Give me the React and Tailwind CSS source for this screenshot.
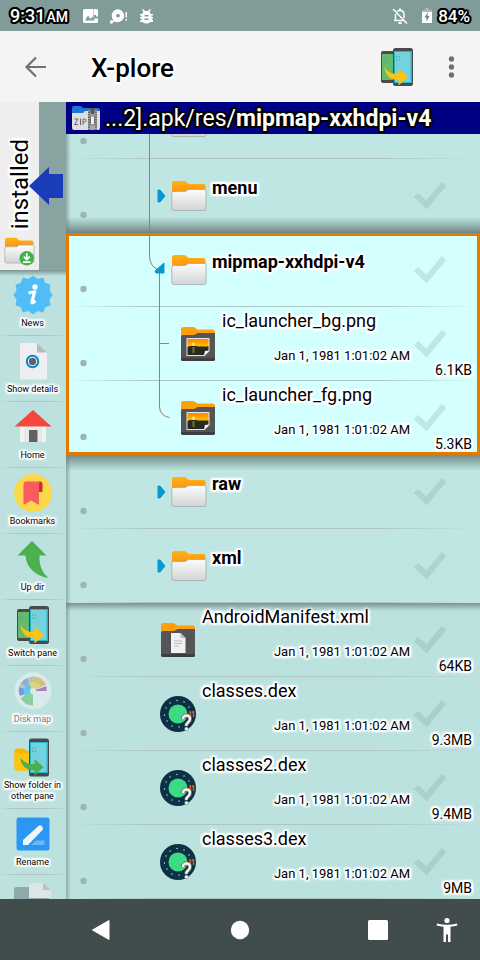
import React from "react";

const HALO =
  "[text-shadow:2px_0_1px_#fff,-2px_0_1px_#fff,0_2px_1px_#fff,0_-2px_1px_#fff,1px_1px_1px_#fff,-1px_1px_1px_#fff,1px_-1px_1px_#fff,-1px_-1px_1px_#fff,2px_2px_2px_#fff,-2px_2px_2px_#fff,2px_-2px_2px_#fff,-2px_-2px_2px_#fff]";
const DARK_HALO =
  "[text-shadow:2px_0_0_#000,-2px_0_0_#000,0_2px_0_#000,0_-2px_0_#000,1px_1px_0_#000,-1px_1px_0_#000,1px_-1px_0_#000,-1px_-1px_0_#000,2px_1px_0_#000,-2px_1px_0_#000,2px_-1px_0_#000,-2px_-1px_0_#000,1px_2px_0_#000,-1px_2px_0_#000,1px_-2px_0_#000,-1px_-2px_0_#000]";
const LINE =
  "bg-[linear-gradient(90deg,transparent,#adc4c3_20%,#adc4c3_75%,transparent)] bg-[length:100%_1px] bg-bottom bg-no-repeat";

/* ---------- icons ---------- */

function PhonesIcon({ className }) {
  return (
    <svg viewBox="0 0 32 38" className={className} aria-hidden="true">
      <rect x="0" y="3" width="17" height="32" rx="2" fill="#4a4a4a" />
      <rect x="1" y="6" width="16" height="26" fill="#66bb6a" />
      <rect x="12" y="0" width="20" height="38" rx="2.500" fill="#4a4a4a" />
      <rect x="13" y="3" width="18" height="32" fill="#26b5cf" />
      <rect x="14" y="4" width="15.500" height="30" fill="#74d2de" />
      <path d="M2.500 10h1.500M2.500 13h1.500M5 10h1M5 13h1M15 9h1.500M15 12h1.500M18 9h1M18 12h1" stroke="#3c9a9f" strokeWidth="1" />
      <path d="M3.500 19c3 5 8 7.500 14 7V20.500L27 29 17.500 37.500V32C10 32.500 4 27 3.500 19Z" fill="#ffc20e" />
    </svg>
  );
}

function FolderShape({ id }) {
  return (
    <>
      <defs>
        <linearGradient id={id + "o"} x1="0" y1="0" x2="0" y2="1">
          <stop offset="0" stopColor="#ffb310" />
          <stop offset="1" stopColor="#fb8c1e" />
        </linearGradient>
        <linearGradient id={id + "w"} x1="0" y1="0" x2="0" y2="1">
          <stop offset="0" stopColor="#fdfdfd" />
          <stop offset="1" stopColor="#d2d3d4" />
        </linearGradient>
      </defs>
      <path d="M1 15V3.500Q1 1 3.500 1H13Q15 1 16 2.500T19 4H32Q34.500 4 34.500 6.500V15Z" fill={`url(#${id}o)`} />
      <path d="M.8 13Q.8 11.500 2.500 11.500H13.500Q15 11.500 16 10.500T18.500 9.500H33Q35 9.500 35 11.500V28.500Q35 30.500 33 30.500H2.800Q.8 30.500 .8 28.500Z" fill={`url(#${id}w)`} stroke="#a4aaaa" strokeWidth=".8" />
    </>
  );
}

function FolderIcon({ id }) {
  return (
    <svg viewBox="0 0 36 32" className="h-8 w-9 shrink-0" aria-hidden="true">
      <FolderShape id={id} />
    </svg>
  );
}

function DarkFolder({ children }) {
  return (
    <svg viewBox="0 0 36 36" className="size-9 shrink-0" aria-hidden="true">
      <path d="M1 14V3.500Q1 1 3.500 1H13Q15 1 16 2.500T19 3.500H32.500Q35 3.500 35 6V14Z" fill="#ff9f0a" />
      <path d="M1 11Q1 9 3 9H13Q15 9 16 8T18.500 7H35V33Q35 35 33 35H3Q1 35 1 33Z" fill="#555557" />
      <path d="M1 32H35V33Q35 35 33 35H3Q1 35 1 33Z" fill="#3d3d3f" />
      {children}
    </svg>
  );
}

function ImageFileIcon({ id }) {
  return (
    <DarkFolder>
      <defs>
        <linearGradient id={id} x1="0" y1="0" x2="0" y2="1">
          <stop offset="0" stopColor="#ff8400" />
          <stop offset="1" stopColor="#ffc400" />
        </linearGradient>
      </defs>
      <path d="M6.500 12H29.500V25L24.500 30H6.500Z" fill="#e4e4e4" />
      <path d="M7.500 13H28.500V21H7.500Z" fill={`url(#${id})`} />
      <path d="M7.500 21 10 20H16L18 20.500H28.500V25L24 29H7.500Z" fill="#272a22" />
      <circle cx="13.500" cy="18" r="1.500" fill="#ffef70" />
      <path d="M12.500 21H14.500V27H12.500Z" fill="#a98b1d" opacity=".7" />
      <path d="M24 29.500 25 25 29.500 24.500Z" fill="#fff" />
    </DarkFolder>
  );
}

function TextFileIcon() {
  return (
    <DarkFolder>
      <path d="M11 11H20.500L25.500 16V31H11Z" fill="#f1f1f1" />
      <path d="M20.500 11V16H25.500Z" fill="#bdbdbd" />
      <path d="M14 19H22M14 21.500H22M14 24H19" stroke="#bcbcbc" strokeWidth="1.200" />
    </DarkFolder>
  );
}

function DexIcon() {
  return (
    <svg viewBox="0 0 36 36" className="size-9 shrink-0" aria-hidden="true">
      <circle cx="18" cy="18" r="18" fill="#0b3145" />
      <g fill="#dbe7ea">
        <circle cx="6" cy="12" r=".7" /><circle cx="10" cy="7" r=".7" /><circle cx="17" cy="4.500" r=".7" />
        <circle cx="24" cy="6" r=".7" /><circle cx="29" cy="11" r=".7" /><circle cx="4.500" cy="19" r=".7" />
        <circle cx="7" cy="25" r=".7" /><circle cx="12" cy="30" r=".7" /><circle cx="19" cy="31" r=".7" />
      </g>
      <circle cx="18" cy="18" r="9.500" fill="#3ddc84" />
      <path d="M29 16H30.500V21M32 16H33.500V21" fill="none" stroke="#f0592b" strokeWidth="1.500" />
      <path d="M23 23Q23 19.500 26.500 19.500T30 23Q30 25 28 26.500T26.500 30" fill="none" stroke="#666" strokeWidth="4" />
      <path d="M23 23Q23 19.500 26.500 19.500T30 23Q30 25 28 26.500T26.500 30" fill="none" stroke="#f5f5f5" strokeWidth="2.400" />
      <circle cx="26.500" cy="33" r="1.900" fill="#f5f5f5" stroke="#777" strokeWidth=".6" />
    </svg>
  );
}

function ZipIcon() {
  return (
    <svg viewBox="0 0 30 26" className="h-[26px] w-[30px] shrink-0" aria-hidden="true">
      <path d="M1 12V3Q1 1 3 1H9Q11 1 12 3H27Q29 3 29 5V12Z" fill="#1e73d6" />
      <path d="M1 8H12L14 6H29V23Q29 25 27 25H3Q1 25 1 23Z" fill="#dedfe1" />
      <path d="M17 5H26V25H17Z" fill="#aaa" />
      <path d="M18 4V25M25 4V25" stroke="#6b6b6b" strokeWidth="2" strokeDasharray="1.500 1" />
      <rect x="19.500" y="3" width="4" height="6" fill="#555" />
      <rect x="19.500" y="11" width="4" height="9" rx="1" fill="#eee" stroke="#555" strokeWidth=".8" />
      <path d="M3.500 14H7L3.500 19.500H7M9.500 13.500V20M12 20V14H13.500Q15 14 15 15.500T13.500 17H12" fill="none" stroke="#666" strokeWidth="1" />
    </svg>
  );
}

function NewsIcon() {
  return (
    <svg viewBox="0 0 40 40" className="size-10" aria-hidden="true">
      <path d="M20 .8 24.800 4 30.200 2.500 32.200 7.800 37.500 9.800 36.500 15.200 39.500 20 36.500 24.800 37.500 30.200 32.200 32.200 30.200 37.500 24.800 36 20 39.200 15.200 36 9.800 37.500 7.800 32.200 2.500 30.200 3.500 24.800 .5 20 3.500 15.200 2.500 9.800 7.800 7.800 9.800 2.500 15.200 4Z" fill="#50bdf8" />
      <circle cx="22" cy="12" r="2.700" fill="#fff" />
      <path d="M15.500 18Q19 17 21.500 17L19 26.500Q18.700 28 20 27.500L22.500 26" fill="none" stroke="#fff" strokeWidth="3.200" />
    </svg>
  );
}

function DetailsIcon() {
  return (
    <svg viewBox="0 0 40 40" className="size-10" aria-hidden="true">
      <path d="M7 3Q7 2 8 2H24L34 11.500V37.500Q34 38.500 33 38.500H8Q7 38.500 7 37.500Z" fill="#eeeff0" />
      <path d="M24 2V11.500H34Z" fill="#b9bcbd" />
      <circle cx="19.500" cy="20.500" r="5.700" fill="#fff" stroke="#0a83c8" strokeWidth="2" />
      <circle cx="19.500" cy="20.500" r="3.700" fill="#5b6469" />
    </svg>
  );
}

function HomeIcon() {
  return (
    <svg viewBox="0 0 40 40" className="size-10" aria-hidden="true">
      <path d="M7 17 20 6 33 17V35H7Z" fill="#f1f2f2" />
      <path d="M11 19H29V35H11Z" fill="#dfe1e2" opacity=".5" />
      <path d="M20 3 1.500 19.500H38.500Z" fill="#f5483d" />
      <rect x="16" y="23" width="8.500" height="12" fill="#616161" />
    </svg>
  );
}

function BookmarksIcon() {
  return (
    <svg viewBox="0 0 40 40" className="size-10" aria-hidden="true">
      <circle cx="20" cy="20" r="19" fill="#fbd84b" />
      <path d="M25.500 8.500H27.500Q29.500 8.500 29.500 11V19H25.500Z" fill="#c62f34" />
      <path d="M10.500 11Q10.500 8.500 13 8.500H28Q26 9 26 11V32L18.200 27.500 10.500 32Z" fill="#f65d5c" />
    </svg>
  );
}

function UpIcon() {
  return (
    <svg viewBox="0 0 40 40" className="size-10" aria-hidden="true">
      <path d="M19 2 33.500 16.500H26.500C26 26 29 33.500 35.500 39 22 37 13 28 12.500 16.500H4.500Z" fill="#4caf50" />
    </svg>
  );
}

function DiskMapIcon() {
  return (
    <svg viewBox="0 0 40 40" className="size-10 opacity-60" aria-hidden="true">
      <circle cx="20" cy="20" r="18.500" fill="#eef1f2" />
      <path d="M20 20 7 25A14.500 14.500 0 0 1 6 16Z" fill="#536dc0" />
      <path d="M20 20 6 16A14.500 14.500 0 0 1 10 10Z" fill="#aab4bd" />
      <path d="M20 20 8 12A14.500 14.500 0 0 1 14 7Z" fill="#7986cb" />
      <path d="M20 20 14 7A14.500 14.500 0 0 1 20 5.500Z" fill="#aab4bd" />
      <path d="M20 20V5.500A14.500 14.500 0 0 1 33 13.500Z" fill="#f0a73b" />
      <path d="M20 20 33.500 15V20Z" fill="#a33cb5" />
      <path d="M20 20V34.500A14.500 14.500 0 0 1 7.500 27Z" fill="#6fc278" />
      <path d="M20 20 12 25A9 9 0 0 1 15.500 12Z" fill="#29b6f6" />
      <path d="M20 20 15.500 12A9 9 0 0 1 28 16Z" fill="#e7cf3e" />
      <circle cx="20" cy="20" r="3" fill="#eef1f2" />
    </svg>
  );
}

function FolderOtherIcon() {
  return (
    <svg viewBox="0 0 40 40" className="size-10" aria-hidden="true">
      <path d="M1.500 14Q1.500 11.500 4 11.500H11L14 14H17V33.500H4Q1.500 33.500 1.500 31Z" fill="#ffb300" />
      <path d="M1.500 16H17V33.500H4Q1.500 33.500 1.500 31Z" fill="#ffc40d" />
      <rect x="16" y="1.500" width="20" height="38" rx="2.500" fill="#4a4a4a" />
      <rect x="17" y="5" width="18" height="31" fill="#26b5cf" />
      <rect x="18" y="6" width="15.500" height="29" fill="#74d2de" />
      <path d="M19 11h1.500M19 14h1.500M22 11h1M22 14h1" stroke="#3c9a9f" />
      <path d="M7.500 20.500C10 25 15 27.500 21.500 27V22L30.500 30 21.500 38.500V33.500C14 33.500 7.500 29 7.500 20.500Z" fill="#4caf50" />
    </svg>
  );
}

function RenameIcon() {
  return (
    <svg viewBox="0 0 40 40" className="size-10" aria-hidden="true">
      <rect x="3.500" y="3.500" width="33" height="33" rx="2.500" fill="#2997f3" />
      <path d="M18 31 23 26.500H31.500V31Z" fill="#69b8f7" />
      <path d="M10 26 25.500 12Q27.500 10.500 29.200 12.500T29.500 16L15 31H10Z" fill="#f1f3f5" />
    </svg>
  );
}

function CopyIcon() {
  return (
    <svg viewBox="0 0 40 40" className="size-10" aria-hidden="true">
      <path d="M1 9Q1 7 3 7H17V30H1Z" fill="#8fa9ad" />
      <path d="M14 15H36V34H14Z" fill="#8fa9ad" />
      <path d="M16 3H30L38 10V18H16Z" fill="#dce6e6" />
      <path d="M30 3V10H38Z" fill="#b4c7c7" />
    </svg>
  );
}

/* ---------- file rows ---------- */

const TREE = {
  pass: { w: "w-[105px]", lines: "M83.500 0V74", arrow: "M92 31H94L99 37 94 43H92Z" },
  last: { w: "w-[105px]", lines: "M83.500 0V22Q83.500 33 91 36M93.500 38V74", arrow: "M89 38 98 30V40H90Z" },
  plain: { w: "w-[105px]", arrow: "M92 31H94L99 37 94 43H92Z" },
  child: { w: "w-[114px]", lines: "M93.500 0V74M94 36.500H103" },
  childLast: { w: "w-[114px]", lines: "M93.500 0V26Q94 35 103.500 36.500" },
  root: { w: "w-[94px]" },
};

function Row({ id, name, tree, icon, date, size, folder }) {
  const t = TREE[tree];
  return (
    <li className={`flex h-[74px] shrink-0 ${LINE}`}>
      <svg className={`h-[74px] shrink-0 ${t.w}`} aria-hidden="true">
        <circle cx="17.500" cy="56" r="3.200" fill="#9fb4b3" />
        {t.lines && <path d={t.lines} fill="none" stroke="#a3805c" strokeWidth="1" />}
        {t.arrow && <path d={t.arrow} fill="#0598d2" stroke="#0598d2" strokeLinejoin="round" />}
      </svg>
      <div className="flex h-[74px] items-center">{icon}</div>
      <div className={`flex min-w-0 flex-1 flex-col ${folder ? "pl-[5px]" : "pl-[6px]"}`}>
        {name && (
          <label
            htmlFor={id}
            className={`text-lg leading-[22px] whitespace-nowrap ${HALO} ${folder ? "pt-[18px] font-bold" : "pt-[3px]"}`}
          >
            {name}
          </label>
        )}
        {date && <span className={`mt-[15px] text-right text-[13px] leading-[18px] ${HALO}`}>{date}</span>}
      </div>
      <div className="flex w-[70px] shrink-0 flex-col pt-[20px] pr-2 pl-1">
        <span className="grid h-8 w-8">
          <input
            id={id}
            type="checkbox"
            aria-label={name ? undefined : "Select folder"}
            className="col-start-1 row-start-1 size-8 appearance-none"
          />
          <svg viewBox="0 0 32 32" className="pointer-events-none col-start-1 row-start-1 size-8" aria-hidden="true">
            <path d="M2 16 12.500 26 30 5" fill="none" stroke="#6b8583" strokeOpacity=".2" strokeWidth="6" />
          </svg>
        </span>
        {size && <span className={`mt-[2px] text-right text-sm leading-[18px] ${HALO}`}>{size}</span>}
      </div>
    </li>
  );
}

const DATE = "Jan 1, 1981 1:01:02 AM";

function Pane() {
  return (
    <main className="flex min-w-0 flex-1 flex-col">
      <div className="flex h-8 shrink-0 items-center gap-1 bg-[#000084] pl-[5px] whitespace-nowrap text-white">
        <ZipIcon />
        <h2 className={`flex pt-[2px] text-[23px] leading-[30px] ${DARK_HALO}`}>
          <span>...2].apk/res/</span>
          <span className="font-bold">mipmap-xxhdpi-v4</span>
        </h2>
      </div>
      <div className="relative flex min-h-0 flex-1 flex-col justify-end overflow-hidden bg-[#bce2e0]">
        <ul className="relative flex shrink-0 flex-col bg-[#c0e6e4]">
          <Row id="above" tree="pass" folder icon={<FolderIcon id="f0" />} />
          <Row id="menu" name="menu" tree="pass" folder icon={<FolderIcon id="f1" />} />
          <li className="pointer-events-none absolute inset-x-0 bottom-0 h-4 bg-linear-to-b from-transparent to-[#6f8583]" />
        </ul>
        <ul className="relative z-10 flex shrink-0 flex-col bg-[#d3fffe]">
          <Row id="mipmap" name="mipmap-xxhdpi-v4" tree="last" folder icon={<FolderIcon id="f2" />} />
          <Row id="bg" name="ic_launcher_bg.png" tree="child" icon={<ImageFileIcon id="i1" />} date={DATE} size="6.1KB" />
          <Row id="fg" name="ic_launcher_fg.png" tree="childLast" icon={<ImageFileIcon id="i2" />} date={DATE} size="5.3KB" />
          <li className="pointer-events-none absolute inset-0 border-[3px] border-[#e07b00]" />
        </ul>
        <ul className="relative flex shrink-0 flex-col bg-[#c0e6e4]">
          <li className="pointer-events-none absolute inset-x-0 top-0 h-4 bg-linear-to-b from-[#748b89] to-transparent" />
          <Row id="raw" name="raw" tree="plain" folder icon={<FolderIcon id="f3" />} />
          <Row id="xml" name="xml" tree="plain" folder icon={<FolderIcon id="f4" />} />
        </ul>
        <ul className="relative flex shrink-0 flex-col">
          <li className="pointer-events-none absolute inset-x-0 top-0 h-2 bg-linear-to-b from-[#7c9391] to-transparent" />
          <Row id="manifest" name="AndroidManifest.xml" tree="root" icon={<TextFileIcon />} date={DATE} size="64KB" />
          <Row id="dex1" name="classes.dex" tree="root" icon={<DexIcon />} date={DATE} size="9.3MB" />
          <Row id="dex2" name="classes2.dex" tree="root" icon={<DexIcon />} date={DATE} size="9.4MB" />
          <Row id="dex3" name="classes3.dex" tree="root" icon={<DexIcon />} date={DATE} size="9MB" />
        </ul>
        <div className="pointer-events-none absolute inset-y-0 left-0 w-[5px] bg-linear-to-r from-[#6b8583]/60 to-transparent" />
      </div>
    </main>
  );
}

/* ---------- side column ---------- */

const ACTIONS = [
  { label: "News", icon: <NewsIcon /> },
  { label: "Show details", icon: <DetailsIcon /> },
  { label: "Home", icon: <HomeIcon /> },
  { label: "Bookmarks", icon: <BookmarksIcon /> },
  { label: "Up dir", icon: <UpIcon /> },
  { label: "Switch pane", icon: <PhonesIcon className="h-10 w-8 py-px" /> },
  { label: "Disk map", icon: <DiskMapIcon />, off: true },
  { label: "Show folder in other pane", icon: <FolderOtherIcon /> },
  { label: "Rename", icon: <RenameIcon /> },
];

function Sidebar() {
  return (
    <aside className="flex w-[66px] shrink-0 flex-col overflow-hidden bg-[#bce1df]">
      <div className="relative flex h-[168px] shrink-0 bg-[#89a3a1]">
        <button className="flex w-[39px] flex-col items-center justify-end gap-2 bg-[#eeeeee] pb-1">
          <span className={`rotate-180 text-[24px] leading-[32px] [writing-mode:vertical-rl] ${HALO}`}>installed</span>
          <svg viewBox="0 0 36 34" className="h-[29px] w-[31px] shrink-0" aria-hidden="true">
            <FolderShape id="inst" />
            <circle cx="26.500" cy="25" r="8.500" fill="#3db54a" />
            <path d="M26.500 19V26M23 23 26.500 26.500 30 23M22 29.500H31" fill="none" stroke="#fff" strokeWidth="2" />
          </svg>
        </button>
        <svg viewBox="0 0 34 38" className="absolute top-[65px] left-[29px] h-[38px] w-[34px]" aria-hidden="true">
          <path d="M0 19 20 0V7H34V31H20V38Z" fill="#1b3cb8" />
        </svg>
      </div>
      <nav className="relative flex min-h-0 flex-1 flex-col overflow-hidden">
        <div className="pointer-events-none absolute inset-x-0 top-0 h-[6px] bg-linear-to-b from-[#7c9391] to-transparent" />
        {ACTIONS.map((a) => (
          <button
            key={a.label}
            className={`flex shrink-0 flex-col items-center gap-[3px] pt-[5px] pr-[3px] pb-[7px] pl-[2px] text-[9px] leading-[11px] ${LINE} ${a.off ? "text-[#6d7d7c]" : "text-black"}`}
          >
            {a.icon}
            <span className={HALO}>{a.label}</span>
          </button>
        ))}
        <button aria-label="Copy" className="flex shrink-0 flex-col items-center pt-[5px] pr-[3px] pl-[2px]">
          <CopyIcon />
        </button>
      </nav>
    </aside>
  );
}

/* ---------- bars ---------- */

function StatusBar() {
  return (
    <div className="flex h-[31px] shrink-0 items-center bg-[#819b98] px-[10px] pt-px text-white">
      <div className={`flex items-baseline gap-px text-lg leading-6 font-medium ${DARK_HALO}`}>
        <span>9:31</span>
        <span className="text-sm leading-5">AM</span>
      </div>
      <svg viewBox="0 0 72 18" className="ml-[14px] h-[18px] w-[72px]" fill="#fff" aria-hidden="true">
        <path d="M2.500 2H11.500V11.500H16V14.500Q16 16 14.500 16H2.500Q1 16 1 14.500V3.500Q1 2 2.500 2ZM3 13.500H13L10.500 9.500 8.500 12 6 8.500Z" fillRule="evenodd" />
        <path d="M12 2H14.500Q16 2 16 3.500V9.500H14V8H12Z" />
        <path d="M36 2.200A6.500 6.500 0 1 1 32.500 14.500L30.500 15 31 12.500A6.500 6.500 0 0 1 36 2.200ZM36 6.700A2 2 0 1 0 36.010 6.700Z" fillRule="evenodd" />
        <circle cx="36" cy="8.700" r="4" fill="none" stroke="#fff" strokeWidth="4" />
        <circle cx="29.500" cy="15" r="1.700" />
        <path d="M43.500 5H45V10.500H43.500ZM43.500 12H45V13.500H43.500Z" />
        <path d="M61 2 63 4Q64.500 3.500 66 4L68 2 69 3 67.500 4.800 69 7H71V8.500H69.500V10H71V11.500H69.500L71 13.500V15H68.500Q67 16.500 64.500 16.500T60.500 15H58V13.500H59.500V11.500H58V10H59.500V8.500H58V7H60L61.500 4.800 60 3ZM62.500 8V9.500H66.500V8ZM62.500 11.500V13H66.500V11.500Z" fillRule="evenodd" />
      </svg>
      <svg viewBox="0 0 18 18" className="ml-auto size-[18px]" fill="none" stroke="#fff" strokeWidth="1.500" aria-hidden="true">
        <path d="M2 2 16 16.500M6 4.500Q7 3.500 9 3.500 13 3.500 13 8V11M4.500 7V13.500H12.500M3 13.500H5" />
        <path d="M9 1.500V3.500M7.500 16H10.500" strokeWidth="2" />
      </svg>
      <svg viewBox="0 0 10 16" className="ml-[13px] h-4 w-[10px]" aria-hidden="true">
        <path d="M3 0H7V2H10V5H0V2H3Z" fill="#aab9b7" />
        <path d="M0 4H10V15H0Z" fill="#fff" />
        <path d="M6 4 2.500 9.500H4.500V13.500L7.500 8H5.500Z" fill="#6f8a87" />
      </svg>
      <span className={`ml-[6px] text-[17px] leading-6 font-medium ${DARK_HALO}`}>84%</span>
    </div>
  );
}

function AppBar() {
  return (
    <header className="flex h-[71px] shrink-0 items-center bg-[#f4f4f4] pr-[17px] pl-6">
      <button aria-label="Back" className="size-6">
        <svg viewBox="0 0 24 24" fill="none" stroke="#717171" strokeWidth="2.200" aria-hidden="true">
          <path d="M12 2.500 2.500 12 12 21.500M3 12H22" />
        </svg>
      </button>
      <h1 className={`ml-[43px] pt-[2px] text-[26px] leading-8 font-medium ${HALO}`}>X-plore</h1>
      <button aria-label="Switch pane" className="ml-auto">
        <PhonesIcon className="h-[38px] w-8" />
      </button>
      <button aria-label="More options" className="ml-[26px] size-6">
        <svg viewBox="0 0 24 24" fill="#707070" aria-hidden="true">
          <circle cx="12.500" cy="4" r="2.700" /><circle cx="12.500" cy="12" r="2.700" /><circle cx="12.500" cy="20" r="2.700" />
        </svg>
      </button>
    </header>
  );
}

function NavBar() {
  return (
    <footer className="flex h-[61px] shrink-0 items-center bg-[#404d4c] pr-[21px] pl-[89px]">
      <div className="flex flex-1 justify-between">
        <button aria-label="Back">
          <svg viewBox="0 0 24 24" className="size-6" fill="#fff" stroke="#fff" strokeLinejoin="round" aria-hidden="true">
            <path d="M3.500 12 20 2.500V21.500Z" />
          </svg>
        </button>
        <button aria-label="Home">
          <svg viewBox="0 0 24 24" className="size-6" fill="#fff" aria-hidden="true">
            <circle cx="12" cy="12" r="9.200" />
          </svg>
        </button>
        <button aria-label="Recents">
          <svg viewBox="0 0 24 24" className="size-6" fill="#fff" aria-hidden="true">
            <rect x="2" y="2" width="20" height="20" rx="1.500" />
          </svg>
        </button>
      </div>
      <button aria-label="Accessibility" className="ml-[45px]">
        <svg viewBox="0 0 24 26" className="h-[26px] w-6" fill="#fff" aria-hidden="true">
          <circle cx="12" cy="3.500" r="2.600" />
          <path d="M2 6.500Q12 9 22 6.500L22.400 8.500Q19 9.500 15.500 9.800V25H13V17.500H11V25H8.500V9.800Q5 9.500 1.600 8.500Z" />
        </svg>
      </button>
    </footer>
  );
}

export default function App() {
  return (
    <div className="flex h-screen w-full flex-col overflow-hidden font-[Roboto,sans-serif] text-black">
      <StatusBar />
      <AppBar />
      <div className="flex min-h-0 flex-1">
        <Sidebar />
        <Pane />
      </div>
      <NavBar />
    </div>
  );
}
